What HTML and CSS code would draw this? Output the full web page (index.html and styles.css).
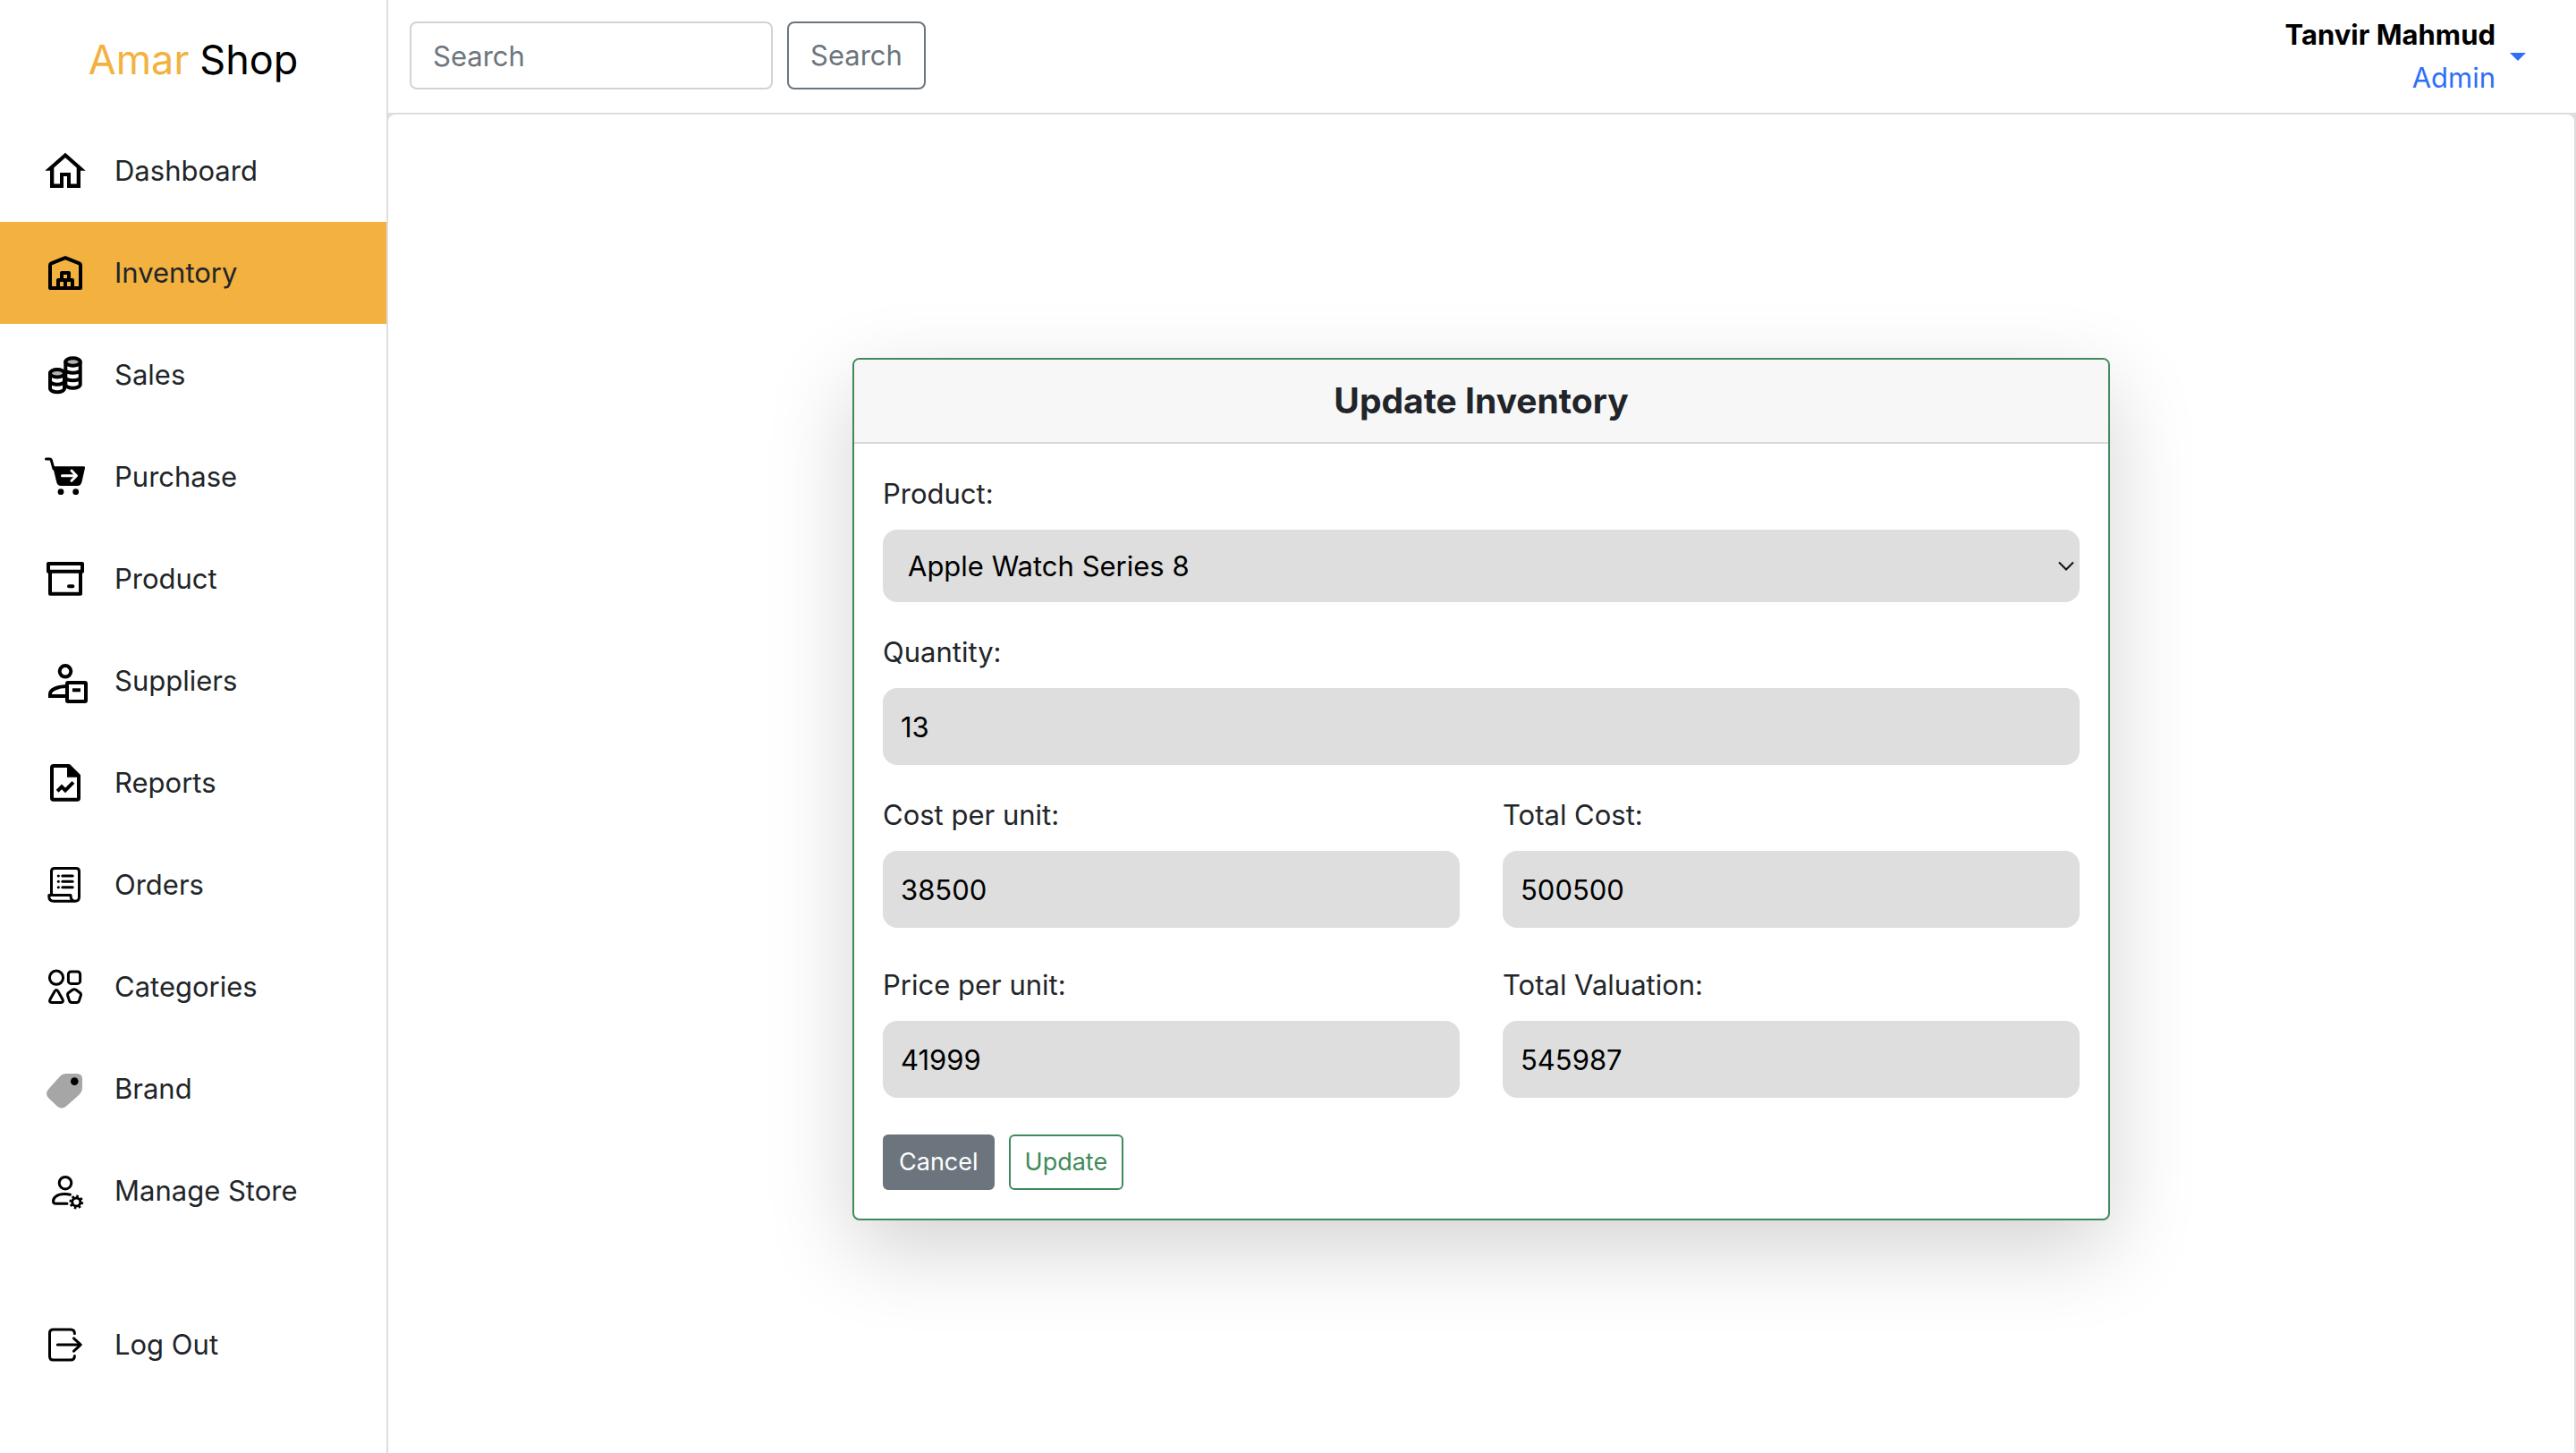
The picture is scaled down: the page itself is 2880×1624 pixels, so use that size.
FILE: index.html
```html
<!DOCTYPE html>
<html lang="en">
<head>
<meta charset="utf-8">
<meta name="viewport" content="width=device-width, initial-scale=1">
<title>Amar Shop - Update Inventory</title>
<link rel="stylesheet" href="styles.css">
</head>
<body>
<div class="app">
  <aside class="sidebar">
    <a class="brand" href="#"><span class="brand-accent">Amar</span> Shop</a>
    <nav class="menu">
      <a class="menu-item" href="#">
        <svg class="icon" viewBox="0 0 54 54" aria-hidden="true"><path class="solid" fill-rule="evenodd" d="M27 6.7 4.3 26.7H10V46H25V33H29V46H44V26.7H49.7ZM27 12.3 39.7 23.5V41.5H33V29H21V41.5H14.3V23.5Z"/></svg>
        <span>Dashboard</span>
      </a>
      <a class="menu-item active" href="#" aria-current="page">
        <svg class="icon" viewBox="0 0 54 54" aria-hidden="true"><path class="bold" d="M10 44V18.5Q10 17 11.4 16.4L27 10.2 42.6 16.4Q44 17 44 18.5V44Z"/><path class="bold" d="M19 44V35H35V44M23 35V27H31V35M27 35V44"/></svg>
        <span>Inventory</span>
      </a>
      <a class="menu-item" href="#">
        <svg class="icon" viewBox="0 0 54 54" aria-hidden="true"><path class="bold" d="M27.3 12.5V37.5C27.3 43 43.7 43 43.7 37.5V12.5M27.3 21C27.3 26 43.7 26 43.7 21M27.3 29.5C27.3 34.5 43.7 34.5 43.7 29.5"/><ellipse class="bold tint" cx="35.5" cy="12.5" rx="8.2" ry="4.2"/><path class="bold paper" d="M10 25V42C10 47.5 26 47.5 26 42V25"/><path class="bold" d="M10 33.5C10 39 26 39 26 33.5"/><ellipse class="bold tint" cx="18" cy="25.2" rx="8" ry="4.2"/></svg>
        <span>Sales</span>
      </a>
      <a class="menu-item" href="#">
        <svg class="icon" viewBox="0 0 54 54" aria-hidden="true"><path class="line" d="M5.5 7H9.5Q11 7 11.5 9L14 18" /><path class="solid" d="M13 15.3H47.8Q49.3 15.3 49 17L45.5 32.5Q44.3 37 40.5 37H22Q18.3 37 17.3 33Z"/><circle class="solid" cx="22" cy="43.7" r="3.4"/><circle class="solid" cx="38.7" cy="43.7" r="3.4"/><path class="line light" d="M23.5 25.7H39M34 20 39.5 25.7 34 31.3"/></svg>
        <span>Purchase</span>
      </a>
      <a class="menu-item" href="#">
        <svg class="icon" viewBox="0 0 54 54" aria-hidden="true"><path class="bold" d="M8 10H46V18.7H8ZM10 18.7V43.7H44V18.7M31 35.3H35.4"/></svg>
        <span>Product</span>
      </a>
      <a class="menu-item" href="#">
        <svg class="icon" viewBox="0 0 54 54" aria-hidden="true"><circle class="bold" cx="27" cy="16.3" r="6.3"/><path class="bold square" d="M29 33C18 33 10 37 10 41.5V44H29"/><rect class="bold" x="29" y="29" width="21" height="21" rx="1"/><path class="bold butt" d="M35 37.3H44"/></svg>
        <span>Suppliers</span>
      </a>
      <a class="menu-item" href="#">
        <svg class="icon" viewBox="0 0 54 54" aria-hidden="true"><path class="bold" d="M14 8H31L42 19V44Q42 45.7 40.3 45.7H13.7Q12 45.7 12 44V10Q12 8 14 8Z"/><path class="solid" d="M29 7H32L43.5 18.5V20.7H29Z"/><path class="bold square" d="M19.5 34.8 23 31.3 27 35.3 34.5 27.8"/></svg>
        <span>Reports</span>
      </a>
      <a class="menu-item" href="#">
        <svg class="icon" viewBox="0 0 54 54" aria-hidden="true"><path class="line" d="M11.5 38V12Q11.5 8.5 15 8.5H39Q42.5 8.5 42.5 12V40.5Q42.5 45.2 37.8 45.2 33 45.2 33 38.5H8.8V40Q8.8 45.2 14 45.2H37.8M23.8 17H35.2M23.8 23.3H35.2M23.8 29.7H35.2M19.2 17H19.4M19.2 23.3H19.4M19.2 29.7H19.4"/></svg>
        <span>Orders</span>
      </a>
      <a class="menu-item" href="#">
        <svg class="icon" viewBox="0 0 54 54" aria-hidden="true"><circle class="line" cx="17" cy="16.7" r="7.6"/><rect class="line" x="30.4" y="10" width="13.2" height="13.4" rx="3"/><path class="line" d="M15.4 31.6Q17 29.6 18.6 31.6L24 41Q25.3 44.2 22.2 44.4H11.8Q8.7 44.2 10 41ZM35.2 30.3Q37 29.2 38.8 30.3L43.2 33.5Q44.9 34.9 44.3 36.8L42.5 42.2Q41.8 44.4 39.6 44.4H34.4Q32.2 44.4 31.5 42.2L29.7 36.8Q29.1 34.9 30.8 33.5Z"/></svg>
        <span>Categories</span>
      </a>
      <a class="menu-item" href="#">
        <svg class="icon" viewBox="0 0 54 54" aria-hidden="true"><path class="muted" d="M27.5 10H40Q46 10 46 16V25.5Q46 30.5 42 34L28.5 46Q23 51 17.5 46L8.5 37.5Q3.5 32.5 8.5 27L21 13Q23.7 10 27.5 10Z"/><circle class="solid" cx="37.3" cy="18.6" r="4.3"/></svg>
        <span>Brand</span>
      </a>
      <a class="menu-item" href="#">
        <svg class="icon" viewBox="0 0 54 54" aria-hidden="true"><circle class="line" cx="27" cy="18.2" r="6.8"/><path class="line" d="M32.5 31.2Q29.5 30.4 26 30.4C18 30.4 13.5 34.5 13.5 38.5Q13.5 41.3 16.5 41.3H29"/><circle class="line" cx="39.3" cy="39.5" r="4.6"/><circle class="teeth" cx="39.3" cy="39.5" r="6.4" pathLength="64"/></svg>
        <span>Manage Store</span>
      </a>
      <a class="menu-item logout" href="#">
        <svg class="icon" viewBox="0 0 54 54" aria-hidden="true"><path class="line" d="M37.4 14.5Q37.4 10 33 10H13.5Q9.5 10 9.5 14V40Q9.5 44 13.5 44H33Q37.4 44 37.4 39.5M18.3 27H44M36.5 19.8 44.3 27 36.5 34.2"/></svg>
        <span>Log Out</span>
      </a>
    </nav>
  </aside>

  <div class="workspace">
    <header class="topbar">
      <form class="search" role="search">
        <input class="search-input" type="search" placeholder="Search" aria-label="Search">
        <button class="search-button" type="button">Search</button>
      </form>
      <button class="account" type="button" aria-haspopup="true">
        <span class="account-text">
          <span class="account-name">Tanvir Mahmud</span>
          <span>Admin</span>
        </span>
        <span class="caret"></span>
      </button>
    </header>

    <main class="frame">
      <div class="canvas">
        <section class="card">
          <h1 class="card-header">Update Inventory</h1>
          <form class="card-body">
            <div class="field">
              <label for="product">Product:</label>
              <div class="select-wrap">
                <select class="control select" id="product"><option>Apple Watch Series 8</option></select>
                <svg class="chevron" viewBox="0 0 18 12" aria-hidden="true"><path d="M1 1.5 9 9.5 17 1.5"/></svg>
              </div>
            </div>
            <div class="field">
              <label for="quantity">Quantity:</label>
              <input class="control" id="quantity" type="text" value="13">
            </div>
            <div class="pairs">
              <div class="field">
                <label for="cost">Cost per unit:</label>
                <input class="control" id="cost" type="text" value="38500">
              </div>
              <div class="field">
                <label for="total-cost">Total Cost:</label>
                <input class="control" id="total-cost" type="text" value="500500">
              </div>
              <div class="field">
                <label for="price">Price per unit:</label>
                <input class="control" id="price" type="text" value="41999">
              </div>
              <div class="field">
                <label for="valuation">Total Valuation:</label>
                <input class="control" id="valuation" type="text" value="545987">
              </div>
            </div>
            <div class="actions">
              <button class="btn btn-cancel" type="button">Cancel</button>
              <button class="btn btn-update" type="button">Update</button>
            </div>
          </form>
        </section>
      </div>
    </main>
  </div>
</div>
</body>
</html>
```
FILE: styles.css
```css
* {
  box-sizing: border-box;
}

body {
  margin: 0;
  background: #fff;
  color: #212529;
  font-family: Inter, "Liberation Sans", sans-serif;
  font-size: 31px;
  line-height: 48px;
}

a {
  color: inherit;
  text-decoration: none;
}

button,
input,
select {
  font: inherit;
}

.app {
  display: flex;
  min-height: 100vh;
}

/* Sidebar */
.sidebar {
  flex: none;
  width: 434px;
  border-right: 2px solid #dedede;
}

.brand {
  display: flex;
  align-items: center;
  justify-content: center;
  gap: 12px;
  height: 134px;
  color: #000;
  font-size: 45px;
}

.brand-accent {
  color: #f3b13f;
}

.menu {
  display: flex;
  flex-direction: column;
}

.menu-item {
  display: flex;
  align-items: center;
  gap: 28px;
  height: 114px;
  padding-left: 46px;
}

.menu-item.active {
  background: #f3b13f;
}

.logout {
  margin-top: 58px;
}

.icon {
  flex: none;
  width: 54px;
  height: 54px;
  fill: none;
  stroke-linecap: round;
  stroke-linejoin: round;
}

.solid {
  fill: #000;
}

.muted {
  fill: #a6a6a6;
}

.bold {
  stroke: #000;
  stroke-width: 4;
}

.line {
  stroke: #000;
  stroke-width: 3;
}

.light {
  stroke: #fff;
}

.tint {
  fill: #b3b3b3;
}

.paper {
  fill: #fff;
}

.square {
  stroke-linecap: square;
  stroke-linejoin: miter;
}

.butt {
  stroke-linecap: butt;
}

.teeth {
  stroke: #000;
  stroke-width: 3;
  stroke-linecap: butt;
  stroke-dasharray: 4;
}

/* Top bar */
.workspace {
  display: flex;
  flex: 1;
  flex-direction: column;
  min-width: 0;
}

.topbar {
  display: flex;
  align-items: flex-start;
  justify-content: space-between;
  height: 126px;
  padding: 0 56px 0 24px;
}

.search {
  display: flex;
  gap: 16px;
  padding-top: 24px;
}

.search-input,
.search-button {
  height: 76px;
  padding: 12px 24px;
  border: 2px solid #ced4da;
  border-radius: 8px;
  background: #fff;
}

.search-input {
  width: 406px;
  appearance: none;
}

.search-input::placeholder {
  color: #6c757d;
  opacity: 1;
}

.search-button {
  border-color: #6c757d;
  color: #6c757d;
}

.account {
  display: flex;
  align-items: center;
  gap: 16px;
  padding: 15px 0;
  border: 0;
  background: none;
  color: #2f6ef6;
}

.account-text {
  display: flex;
  flex-direction: column;
  text-align: right;
}

.account-name {
  color: #000;
  font-weight: 700;
}

.caret {
  border: 9px solid transparent;
  border-top-color: currentColor;
  border-bottom: 0;
}

/* Content panel */
.frame {
  display: flex;
  flex: 1;
  padding: 2px 2px 0 0;
  background: #dedede;
}

.canvas {
  display: flex;
  flex: 1;
  align-items: flex-start;
  justify-content: center;
  padding: 272px 24px 24px;
  border-radius: 8px 8px 0 0;
  background: #fff;
}

/* Inventory form */
.card {
  width: 100%;
  max-width: 1406px;
  border: 2px solid #3f8a5a;
  border-radius: 8px;
  background: #fff;
  box-shadow: 0 32px 96px rgba(0, 0, 0, 0.175);
}

.card-header {
  margin: 0;
  padding: 22px 32px;
  border-bottom: 2px solid #d9d9d9;
  border-radius: 6px 6px 0 0;
  background: #f7f7f7;
  font-size: 39px;
  font-weight: 700;
  line-height: 48px;
  text-align: center;
}

.card-body {
  display: flex;
  flex-direction: column;
  gap: 32px;
  padding: 32px;
}

.field {
  display: flex;
  flex-direction: column;
  gap: 16px;
}

.pairs {
  display: grid;
  grid-template-columns: 1fr 1fr;
  gap: 40px 48px;
}

.control {
  width: 100%;
  height: 86px;
  padding: 0 20px;
  border: 0;
  border-radius: 16px;
  background: #dedede;
  color: #000;
}

.select-wrap {
  display: grid;
  align-items: center;
}

.select-wrap > * {
  grid-area: 1 / 1;
}

.select {
  height: 81px;
  padding: 0 28px;
  appearance: none;
}

.chevron {
  justify-self: end;
  width: 18px;
  height: 12px;
  margin-right: 6px;
  fill: none;
  stroke: #111;
  stroke-width: 2;
  pointer-events: none;
}

.actions {
  display: flex;
  gap: 16px;
  padding-top: 9px;
}

.btn {
  height: 62px;
  padding: 0 16px;
  border: 2px solid;
  border-radius: 6px;
  font-size: 27px;
}

.btn-cancel {
  border-color: #6c757d;
  background: #6c757d;
  color: #fff;
}

.btn-update {
  border-color: #3f8a5a;
  background: #fff;
  color: #3f8a5a;
}
```
